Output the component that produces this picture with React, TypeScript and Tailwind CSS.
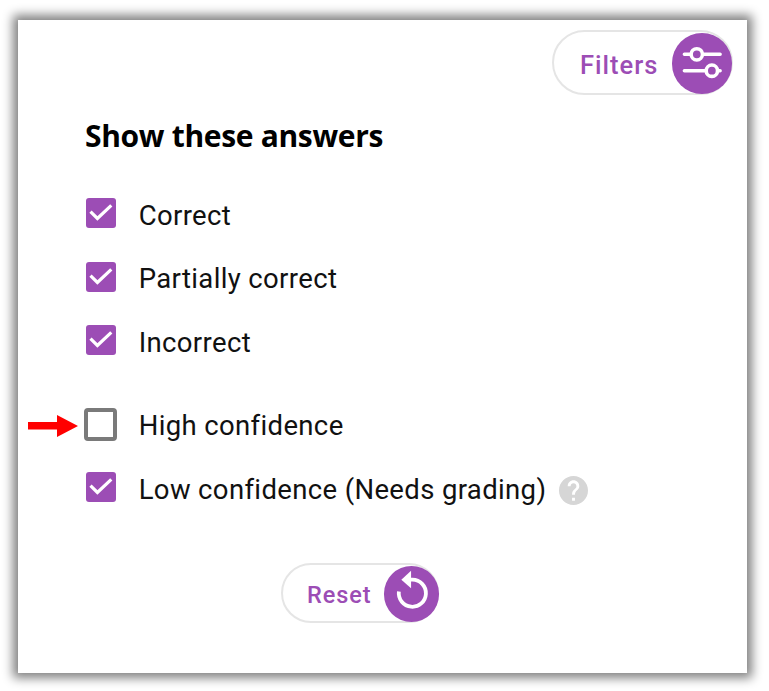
type AnswerFilter = { label: string; checked: boolean; help?: boolean; pointer?: boolean };

const results: AnswerFilter[] = [
  { label: "Correct", checked: true },
  { label: "Partially correct", checked: true },
  { label: "Incorrect", checked: true },
];

const confidence: AnswerFilter[] = [
  { label: "High confidence", checked: false, pointer: true },
  { label: "Low confidence (Needs grading)", checked: true, help: true },
];

function CheckBox({ checked }: { checked: boolean }) {
  if (!checked) {
    return <span className="-ml-[2px] -mr-px h-[33px] w-[33px] shrink-0 rounded-[4px] border-4 border-[#7a7a7a] bg-white" />;
  }
  return (
    <span className="-mt-px h-[30px] w-[30px] shrink-0 rounded-[3px] bg-[#9c4db5]">
      <svg viewBox="0 0 30 30" className="h-full w-full" fill="none" stroke="white" strokeWidth="3.2">
        <path d="M4.5 13.6 L11.4 20.5 L25.3 7.3" />
      </svg>
    </span>
  );
}

function FilterRow({ item }: { item: AnswerFilter }) {
  return (
    <div className="relative flex h-[63.5px] items-center">
      {item.pointer && (
        <svg viewBox="0 0 50 22" className="absolute -left-[58px] top-[22px] h-[22px] w-[50px]">
          <path d="M0 7 H29 V0 L50 11 L29 22 V14.5 H0Z" fill="#ff0000" />
        </svg>
      )}
      <CheckBox checked={item.checked} />
      <span className="ml-[22.7px] translate-y-[2px] whitespace-nowrap text-[27.5px] leading-8 tracking-[0.36px] text-[#111]">
        {item.label}
      </span>
      {item.help && (
        <svg viewBox="2 2 20 20" className="ml-[13px] mt-[6px] h-[29px] w-[29px]" fill="#d6d6d6">
          <path d="M12 2C6.48 2 2 6.48 2 12s4.48 10 10 10 10-4.48 10-10S17.52 2 12 2zm1 17h-2v-2h2v2zm2.07-7.75-.9.92C13.45 12.9 13 13.5 13 15h-2v-.5c0-1.1.45-2.1 1.17-2.83l1.24-1.26c.37-.36.59-.86.59-1.41 0-1.1-.9-2-2-2s-2 .9-2 2H8c0-2.21 1.79-4 4-4s4 1.79 4 4c0 .88-.36 1.68-.93 2.25z" />
        </svg>
      )}
    </div>
  );
}

export default function App() {
  return (
    <div className="h-[691px] w-[769px] overflow-hidden bg-white pl-[18px] pt-5 font-[Roboto,sans-serif]">
      <main className="flex h-[653px] w-[729px] flex-col bg-white shadow-[0_0_10px_5px_#808080]">
        <button className="ml-auto mr-[14px] mt-[10px] flex h-[65px] w-[181px] items-center justify-between rounded-full border-2 border-[#e5e5e5] pl-[26px] text-[25.5px] font-medium tracking-[1px] text-[#9c4db5]">
          <span className="translate-y-[3px]">Filters</span>
          <span className="-mr-px mt-[2px] h-[60.5px] w-[60.5px] shrink-0 rounded-full bg-[#9c4db5]">
            <svg viewBox="0 0 61 61" className="h-full w-full" fill="none" stroke="white" strokeWidth="3.6" strokeLinecap="round">
              <path d="M12.5 21.5H18.5M31 21.5H48.5M12.5 38H34M46.500 38H48.500" />
              <circle cx="25" cy="21.5" r="5.700" />
              <circle cx="40.200" cy="38" r="5.700" />
            </svg>
          </span>
        </button>
        <h1 className="ml-[67px] mt-[20px] whitespace-nowrap font-['Open_Sans',sans-serif] text-[30px] font-bold leading-[42px] tracking-[-0.32px] text-black">
          Show these answers
        </h1>
        <section className="ml-[68px] mt-[25px]">
          {results.map((item) => (
            <FilterRow key={item.label} item={item} />
          ))}
        </section>
        <section className="ml-[68px] mt-5">
          {confidence.map((item) => (
            <FilterRow key={item.label} item={item} />
          ))}
        </section>
        <button className="ml-[263px] mt-[43px] flex h-[60px] w-[158px] items-center justify-between rounded-full border-2 border-[#e5e5e5] pl-[24px] text-[23.5px] font-medium tracking-[0.95px] text-[#9c4db5]">
          <span className="translate-y-[3px]">Reset</span>
          <span className="-mr-[2px] mt-[3px] h-[56px] w-[55.500px] shrink-0 rounded-full bg-[#9c4db5]">
            <svg viewBox="0 0 56 56" className="h-full w-full">
              <path d="M15 25.500 A13.700 13.700 0 1 0 28.700 13.500 H26" fill="none" stroke="white" strokeWidth="3.800" />
              <path d="M27.300 4.500 V22.300 L17.500 13.500Z" fill="white" />
            </svg>
          </span>
        </button>
      </main>
    </div>
  );
}
